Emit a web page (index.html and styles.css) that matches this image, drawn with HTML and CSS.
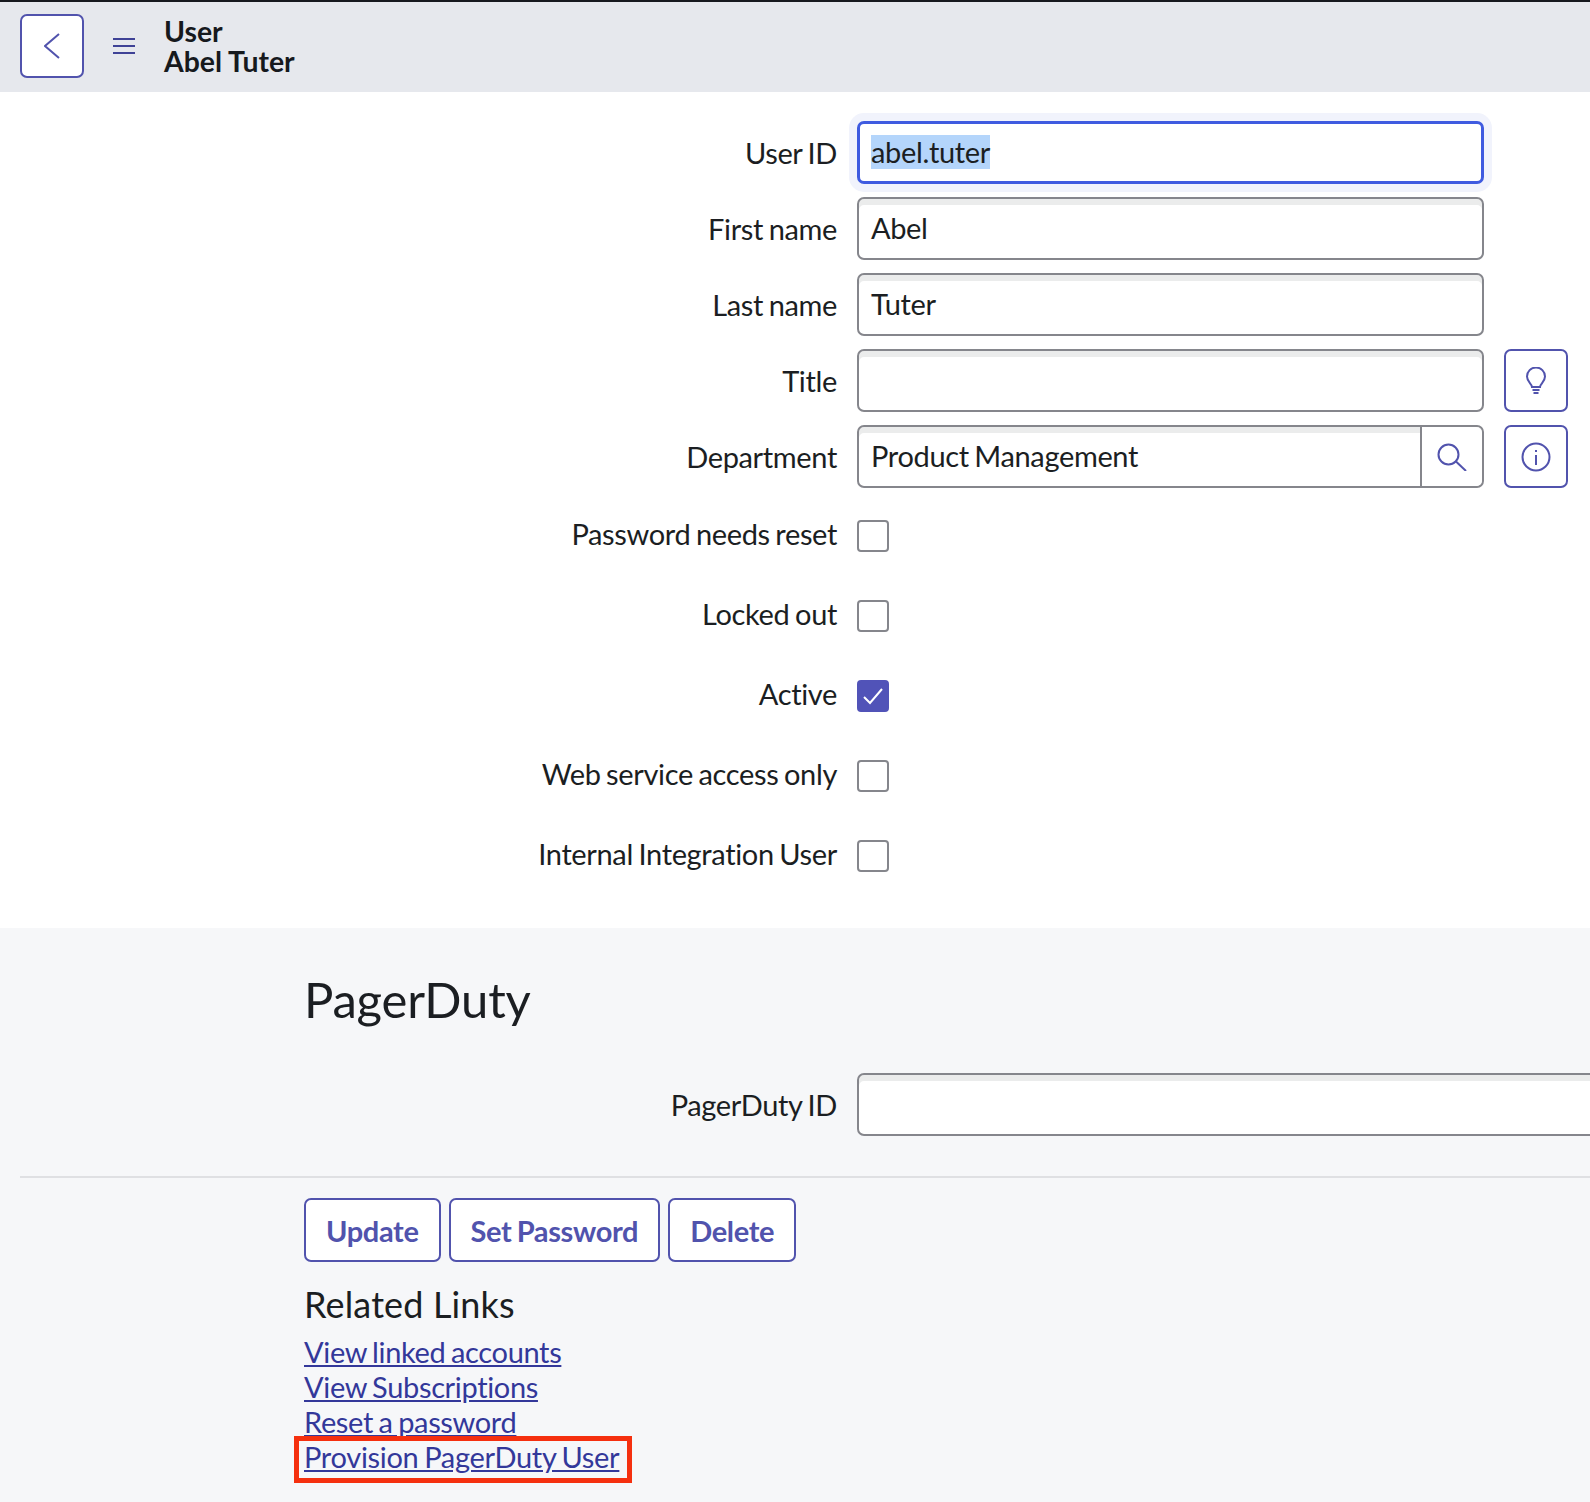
FILE: index.html
```html
<!DOCTYPE html>
<html lang="en">
<head>
<meta charset="utf-8">
<title>User - Abel Tuter</title>
<link rel="stylesheet" href="styles.css">
</head>
<body>
<div class="page">
  <header class="topbar">
    <button class="back" type="button" aria-label="Back">
      <svg width="16" height="26" viewBox="0 0 16 26"><polyline points="15,1 1,13 15,25"/></svg>
    </button>
    <button class="menu" type="button" aria-label="Menu">
      <svg width="22" height="16" viewBox="0 0 22 16"><path d="M0 1h22M0 8h22M0 15h22"/></svg>
    </button>
    <h1 class="title"><span class="title-line">User</span><span class="title-line">Abel Tuter</span></h1>
  </header>

  <section class="form">
    <div class="row">
      <label class="label">User ID</label>
      <div class="field focused"><span class="selected">abel.tuter</span></div>
    </div>
    <div class="row">
      <label class="label">First name</label>
      <div class="field">Abel</div>
    </div>
    <div class="row">
      <label class="label">Last name</label>
      <div class="field">Tuter</div>
    </div>
    <div class="row">
      <label class="label">Title</label>
      <div class="field"></div>
      <button class="side" type="button" aria-label="Suggestion">
        <svg width="22" height="28" viewBox="0 0 22 28"><path d="M7 20c0-3-5-5-5-10.500a9 9 0 0 1 18 0C20 15 15 17 15 20z"/><path d="M7.500 23h7M8.500 26h5"/></svg>
      </button>
    </div>
    <div class="row">
      <label class="label">Department</label>
      <div class="field lookup">
        <div class="lookup-text">Product Management</div>
        <div class="lookup-btn">
          <svg width="30" height="28" viewBox="0 0 30 28"><circle cx="11.500" cy="11.500" r="10"/><path d="M19 18.500 29 28"/></svg>
        </div>
      </div>
      <button class="side" type="button" aria-label="Info">
        <svg width="30" height="30" viewBox="0 0 30 30"><circle cx="15" cy="15" r="13.500"/><path d="M15 13v10M15 8v2"/></svg>
      </button>
    </div>

    <div class="checks">
      <div class="row check-row">
        <label class="label">Password needs reset</label>
        <span class="box"></span>
      </div>
      <div class="row check-row">
        <label class="label">Locked out</label>
        <span class="box"></span>
      </div>
      <div class="row check-row">
        <label class="label">Active</label>
        <span class="box on">
          <svg width="22" height="18" viewBox="0 0 22 18"><polyline points="2,10 8,16 20,2"/></svg>
        </span>
      </div>
      <div class="row check-row">
        <label class="label">Web service access only</label>
        <span class="box"></span>
      </div>
      <div class="row check-row">
        <label class="label">Internal Integration User</label>
        <span class="box"></span>
      </div>
    </div>
  </section>

  <section class="lower">
    <h2 class="section-title">PagerDuty</h2>
    <div class="row">
      <label class="label">PagerDuty ID</label>
      <div class="field wide"></div>
    </div>
    <hr class="divider">
    <div class="actions">
      <button class="action" type="button">Update</button>
      <button class="action" type="button">Set Password</button>
      <button class="action" type="button">Delete</button>
    </div>
    <h3 class="links-title">Related Links</h3>
    <ul class="links">
      <li><a href="#">View linked accounts</a></li>
      <li><a href="#">View Subscriptions</a></li>
      <li><a href="#">Reset a password</a></li>
      <li class="flagged"><a href="#">Provision PagerDuty User</a></li>
    </ul>
  </section>
</div>
</body>
</html>
```
FILE: styles.css
```css
* { box-sizing: border-box; }
html, body { margin: 0; padding: 0; }
body {
  font-family: Lato, "Open Sans", sans-serif;
  color: #1b1e22;
  background: #fff;
  letter-spacing: -0.35px;
  word-spacing: -1.5px;
  font-variant-ligatures: none;
}
.page { width: 1590px; height: 1502px; overflow: hidden; display: flex; flex-direction: column; }

.topbar {
  height: 92px;
  flex: none;
  border-top: 2px solid #17191f;
  background: #e6e8ed;
  display: flex;
  align-items: center;
  padding: 0 0 2px 20px;
}
.back {
  width: 64px; height: 64px;
  background: #fff;
  border: 2px solid #5153ad;
  border-radius: 7px;
  padding: 0;
  display: flex; align-items: center; justify-content: center;
}
.back svg { fill: none; stroke: #5153ad; stroke-width: 2; }
.menu {
  margin-left: 29px;
  width: 22px;
  padding: 0; border: 0; background: none;
  display: flex;
}
.menu svg { fill: none; stroke: #3f4296; stroke-width: 2; }
.title {
  margin: 0 0 0 29px;
  font-size: 28.4px;
  font-weight: 700;
  letter-spacing: 0;
  word-spacing: 0;
  color: #16191d;
}
.title-line { display: block; height: 30px; line-height: 30px; }

.form { padding: 29px 0 56px; display: flex; flex-direction: column; gap: 13px; flex: none; }
.row { display: flex; align-items: center; }
.label {
  width: 837px;
  text-align: right;
  font-size: 29px;
  line-height: 36px;
  margin-right: 20px;
  flex: none;
}
.check-row .label { padding-bottom: 4px; }
.field {
  width: 627px;
  height: 63px;
  flex: none;
  border: 2px solid #85868c;
  border-radius: 7px;
  background: #fff;
  box-shadow: inset 0 6px 0 #ebecec;
  font-size: 29px;
  line-height: 58px;
  padding: 0 12px;
}
.field.focused {
  border: 3px solid #3f5be0;
  box-shadow: 0 0 0 8px #f1f3fc;
  line-height: 55px;
  padding: 0 11px;
}
.selected { background: #b4d5fb; display: inline-block; line-height: 34px; }
.lookup { display: flex; padding: 0; }
.lookup-text { flex: 1; padding: 0 12px; }
.lookup-btn {
  width: 62px;
  background: #fff;
  border-left: 2px solid #85868c;
  border-radius: 0 6px 6px 0;
  display: flex; align-items: center; justify-content: center;
}
.lookup-btn svg { fill: none; stroke: #5153ad; stroke-width: 2; }
.side {
  margin-left: 20px;
  width: 64px; height: 63px;
  background: #fff;
  border: 2px solid #5153ad;
  border-radius: 7px;
  padding: 0;
  display: flex; align-items: center; justify-content: center;
}
.side svg { fill: none; stroke: #5153ad; stroke-width: 2; }

.checks { display: flex; flex-direction: column; gap: 48px; padding-top: 19px; }
.check-row { height: 32px; }
.box {
  width: 32px; height: 32px;
  border: 2px solid #85868c;
  border-radius: 4px;
  background: #fff;
  display: flex; align-items: center; justify-content: center;
}
.box.on { background: #5153b8; border-color: #5153b8; }
.box.on svg { fill: none; stroke: #fff; stroke-width: 2; }

.lower { flex: 1; background: #f6f7f9; display: flex; flex-direction: column; }
.section-title {
  margin: 41px 0 44px 304px;
  font-size: 49px;
  line-height: 60px;
  font-weight: 400;
  letter-spacing: -0.2px;
  word-spacing: 0;
  color: #1b1e22;
}
.field.wide { width: 760px; }
.divider {
  margin: 40px 0 0 20px;
  width: 1570px;
  height: 2px;
  border: 0;
  background: #dfe0e3;
}
.actions { display: flex; gap: 8px; margin: 20px 0 0 304px; }
.action {
  height: 64px;
  padding: 0 20px;
  background: #fff;
  border: 2px solid #5153ad;
  border-radius: 7px;
  color: #5153ad;
  font: 700 29px Lato, sans-serif;
  font-variant-ligatures: none;
  letter-spacing: -0.35px;
  word-spacing: -1.5px;
}
.links-title {
  margin: 20px 0 0 304px;
  font-size: 36px;
  line-height: 44px;
  font-weight: 400;
  letter-spacing: 0.15px;
  word-spacing: 0;
}
.links {
  list-style: none;
  margin: 8px 0 0 304px;
  padding: 0;
  font-size: 29px;
  line-height: 35px;
}
.links a { color: #33389a; text-decoration: underline; }
.flagged {
  width: fit-content;
  margin: 2px 0 0 -5px;
  padding: 0 8px 6px 5px;
  line-height: 31px;
  letter-spacing: -0.3px;
  outline: 5px solid #f5300f;
}
```
